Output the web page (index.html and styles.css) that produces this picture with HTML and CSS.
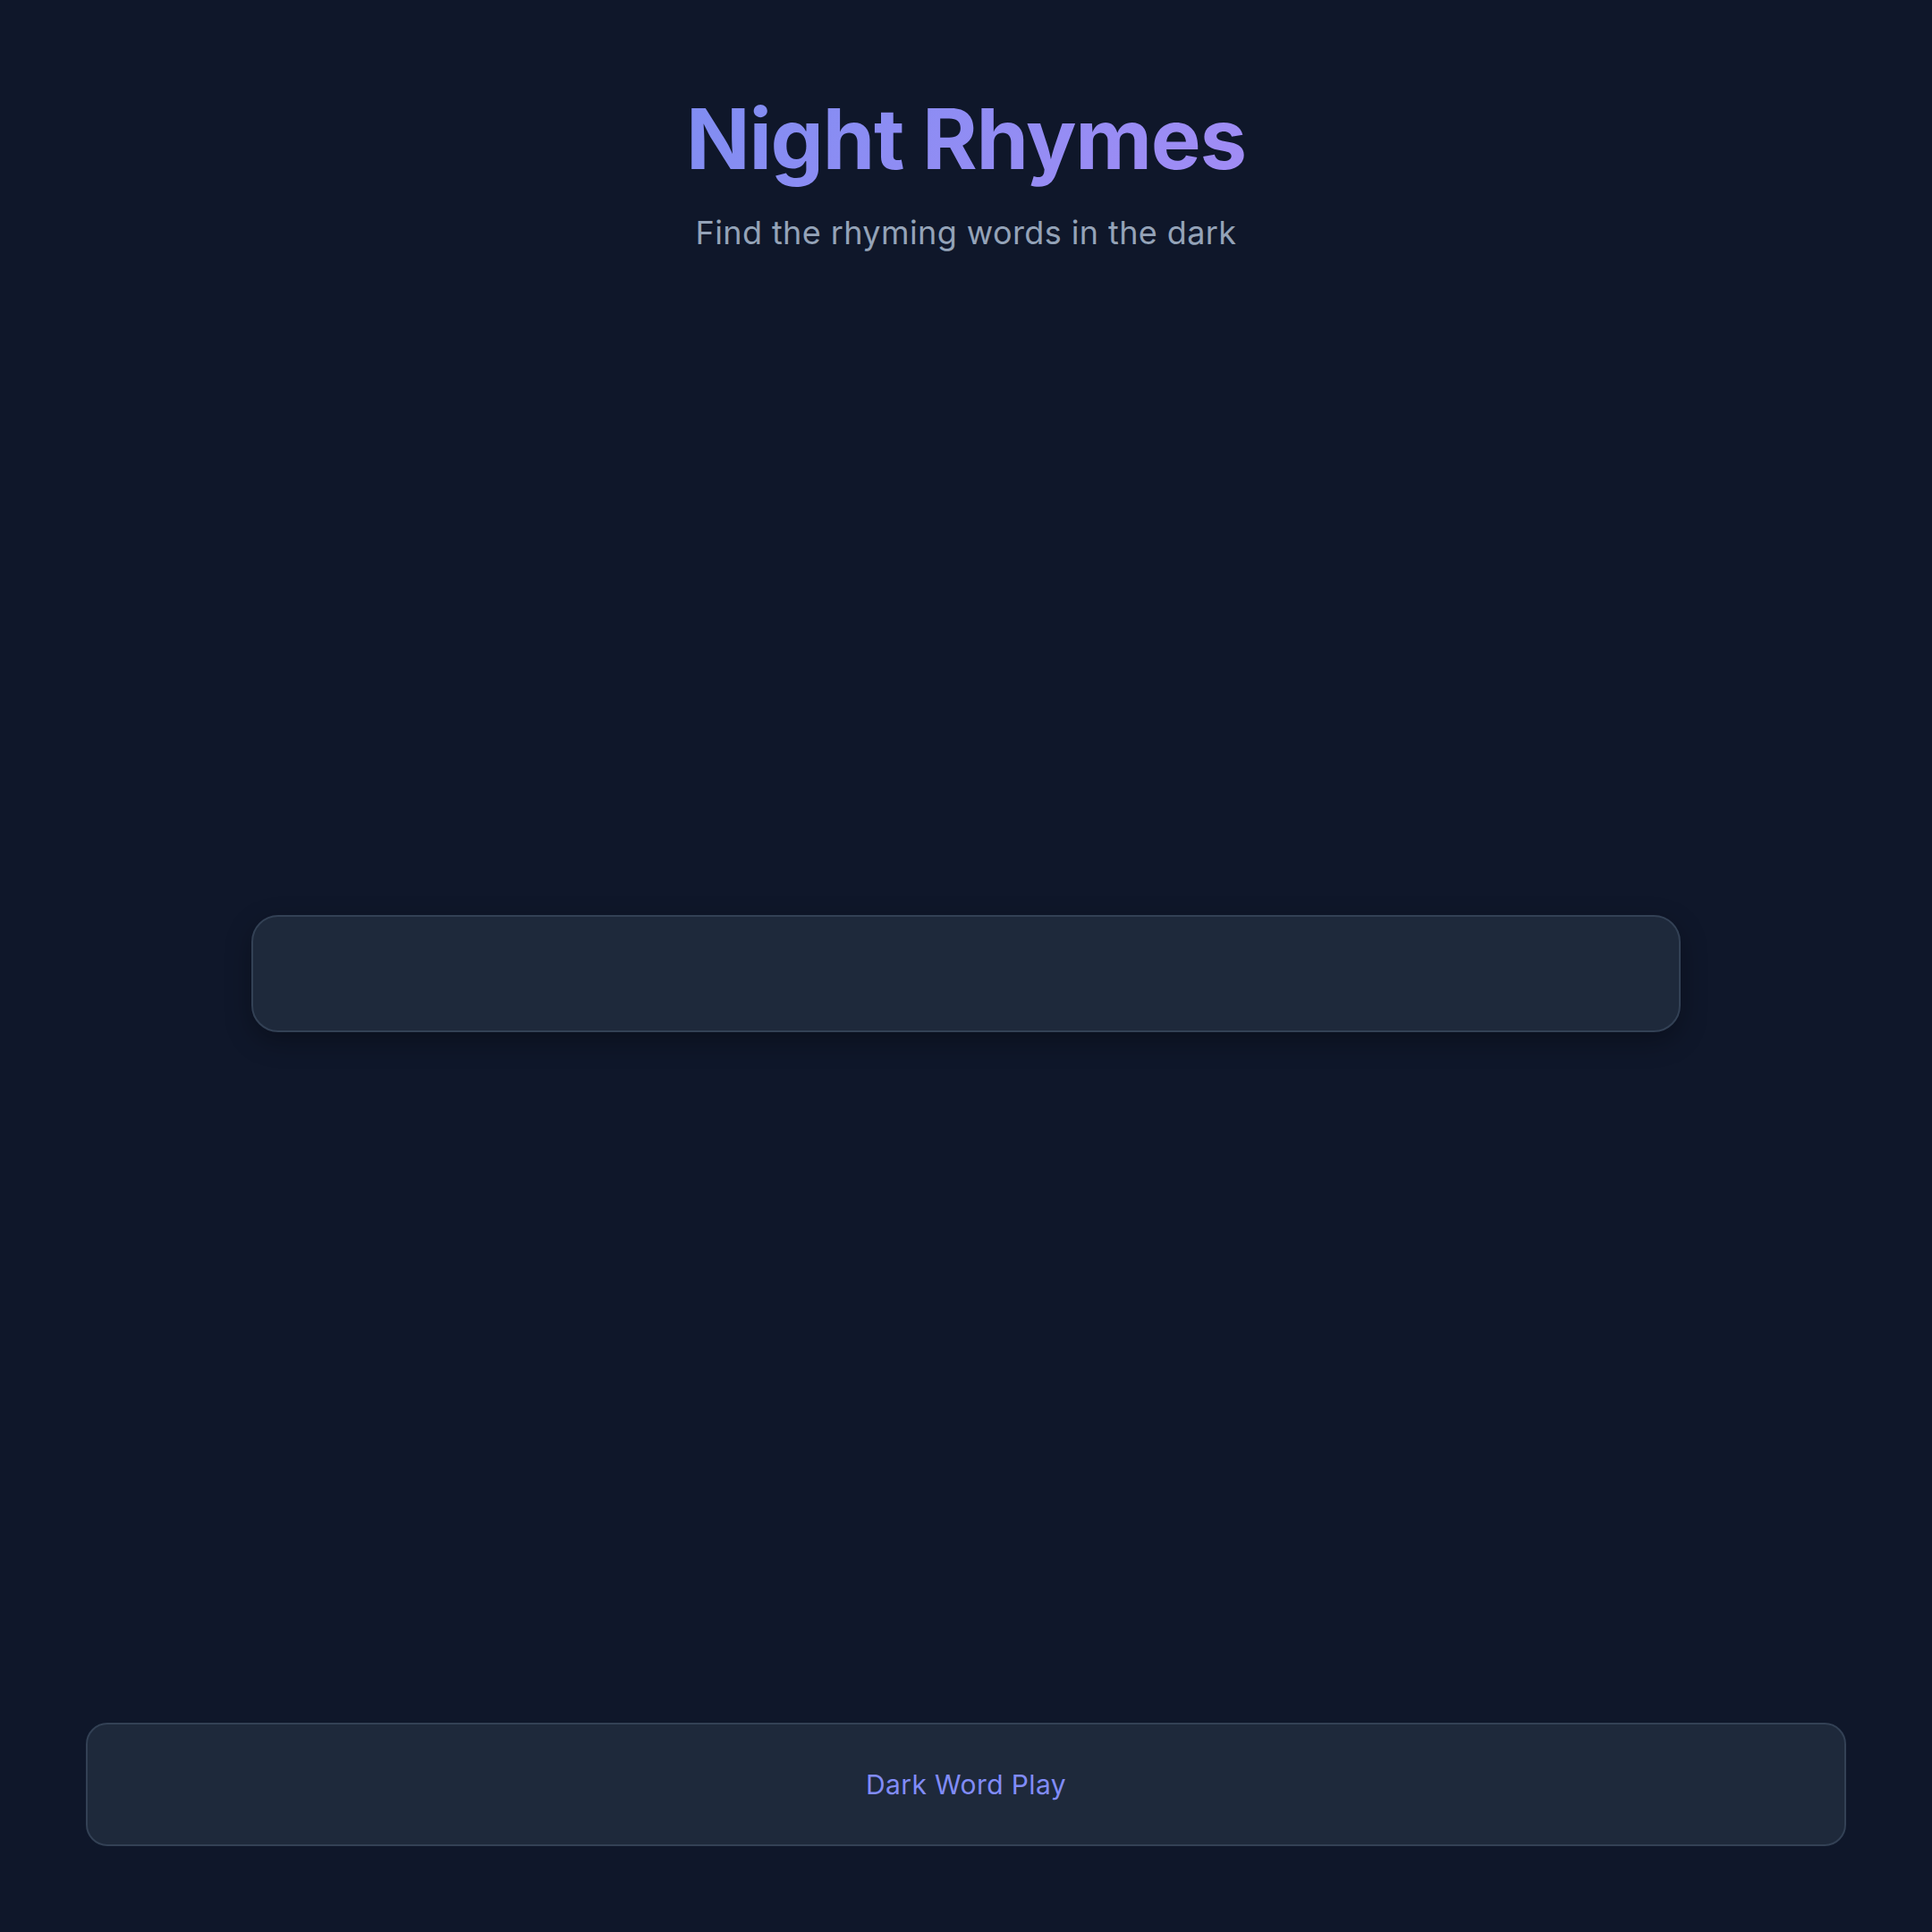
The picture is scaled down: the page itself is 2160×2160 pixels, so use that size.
FILE: index.html
```html
<!DOCTYPE html>
<html lang="en">
<head>
<meta charset="utf-8">
<title>Night Rhymes</title>
<link rel="stylesheet" href="styles.css">
</head>
<body>
  <header class="header">
    <h1 class="title">Night Rhymes</h1>
    <p class="subtitle">Find the rhyming words in the dark</p>
  </header>
  <main class="main">
    <div class="card"></div>
  </main>
  <footer class="footer">
    <span class="footer-text">Dark Word Play</span>
  </footer>
</body>
</html>
```

FILE: styles.css
```css
* { box-sizing: border-box; }

html, body {
  margin: 0;
  padding: 0;
}

body {
  min-height: 100vh;
  background: #0f172a;
  font-family: Inter, "Noto Sans", "Liberation Sans", sans-serif;
  display: flex;
  flex-direction: column;
  align-items: center;
}

.header {
  padding-top: 98px;
  display: flex;
  flex-direction: column;
  align-items: center;
}

.title {
  margin: 0;
  font-size: 94px;
  line-height: 115px;
  font-weight: 700;
  letter-spacing: -1.3px;
  background: linear-gradient(135deg, #7f8df2, #a28cf5);
  -webkit-background-clip: text;
  background-clip: text;
  color: transparent;
}

.subtitle {
  margin: 20px 0 0;
  font-size: 36px;
  line-height: 54px;
  letter-spacing: 0.4px;
  color: #94a3b8;
}

.main {
  width: 100%;
  display: flex;
  justify-content: center;
  padding-top: 736px;
}

.card {
  width: 1598px;
  height: 131px;
  background: #1e293b;
  border: 2px solid #334155;
  border-radius: 30px;
  box-shadow: 0 10px 30px rgba(0, 0, 0, 0.3);
}

.footer {
  margin: auto 96px 96px;
  align-self: stretch;
  height: 138px;
  background: #1e293b;
  border: 2px solid #334155;
  border-radius: 24px;
  display: flex;
  align-items: center;
  justify-content: center;
}

.footer-text {
  font-size: 30px;
  line-height: 45px;
  letter-spacing: 0.4px;
  color: #818cf8;
}
```
